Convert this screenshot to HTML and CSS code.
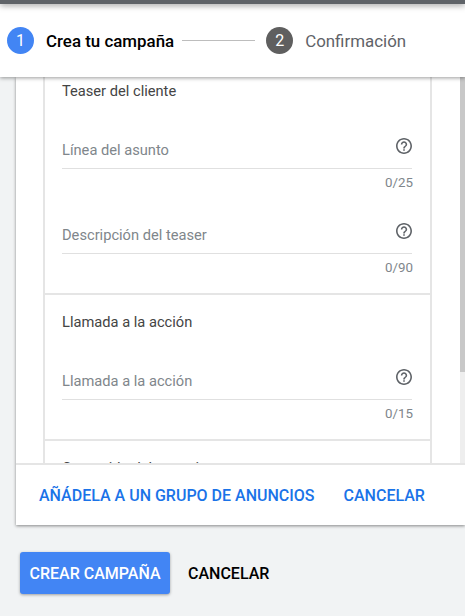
FILE: index.html
```html
<!DOCTYPE html>
<html lang="es">
<head>
  <meta charset="UTF-8">
  <meta name="viewport" content="width=device-width, initial-scale=1.0">
  <title>Crea tu campaña</title>
  <link rel="stylesheet" href="styles.css">
</head>
<body>

<div class="top-strip"></div>

<header class="stepper">
  <div class="step-num step-num-active">1</div>
  <div class="step-title">Crea tu campaña</div>
  <div class="step-line"></div>
  <div class="step-num">2</div>
  <div class="step-title step-title-off">Confirmación</div>
</header>

<div class="card">
  <div class="card-body">
    <div class="card-scroll">
      <div class="box">
        <section class="section section-first">
          <h2>Teaser del cliente</h2>
          <div class="field">
            <span class="field-label">Línea del asunto</span>
            <svg class="help" viewBox="2 2 20 20"><path d="M11 18h2v-2h-2v2zm1-16C6.48 2 2 6.48 2 12s4.48 10 10 10 10-4.48 10-10S17.52 2 12 2zm0 18c-4.41 0-8-3.59-8-8s3.59-8 8-8 8 3.59 8 8-3.59 8-8 8zm0-14c-2.21 0-4 1.79-4 4h2c0-1.1.9-2 2-2s2 .9 2 2c0 2-3 1.75-3 5h2c0-2.25 3-2.5 3-5 0-2.21-1.79-4-4-4z"/></svg>
          </div>
          <div class="count">0/25</div>
          <div class="field field-next">
            <span class="field-label">Descripción del teaser</span>
            <svg class="help" viewBox="2 2 20 20"><path d="M11 18h2v-2h-2v2zm1-16C6.48 2 2 6.48 2 12s4.48 10 10 10 10-4.48 10-10S17.52 2 12 2zm0 18c-4.41 0-8-3.59-8-8s3.59-8 8-8 8 3.59 8 8-3.59 8-8 8zm0-14c-2.21 0-4 1.79-4 4h2c0-1.1.9-2 2-2s2 .9 2 2c0 2-3 1.75-3 5h2c0-2.25 3-2.5 3-5 0-2.21-1.79-4-4-4z"/></svg>
          </div>
          <div class="count">0/90</div>
        </section>
        <section class="section">
          <h2>Llamada a la acción</h2>
          <div class="field">
            <span class="field-label">Llamada a la acción</span>
            <svg class="help" viewBox="2 2 20 20"><path d="M11 18h2v-2h-2v2zm1-16C6.48 2 2 6.48 2 12s4.48 10 10 10 10-4.48 10-10S17.52 2 12 2zm0 18c-4.41 0-8-3.59-8-8s3.59-8 8-8 8 3.59 8 8-3.59 8-8 8zm0-14c-2.21 0-4 1.79-4 4h2c0-1.1.9-2 2-2s2 .9 2 2c0 2-3 1.75-3 5h2c0-2.25 3-2.5 3-5 0-2.21-1.79-4-4-4z"/></svg>
          </div>
          <div class="count">0/15</div>
        </section>
        <section class="section">
          <h2>Contenido del anuncio</h2>
        </section>
      </div>
    </div>
    <div class="scrollbar"><div class="scrollbar-thumb"></div></div>
  </div>
  <div class="card-footer">
    <button class="link-btn">AÑÁDELA A UN GRUPO DE ANUNCIOS</button>
    <button class="link-btn">CANCELAR</button>
  </div>
</div>

<div class="page-actions">
  <button class="primary-btn">CREAR CAMPAÑA</button>
  <button class="plain-btn">CANCELAR</button>
</div>

</body>
</html>
```

FILE: styles.css
```css
body {
  font-family: 'Roboto', sans-serif;
  margin: 0;
  height: 616px;
  overflow: hidden;
  display: flex;
  flex-direction: column;
  background-color: #f1f3f4;
}

button {
  font-family: inherit;
  font-size: 16px;
  font-weight: 500;
  border: none;
  background: none;
  padding: 0;
  cursor: pointer;
}

.top-strip {
  flex: none;
  height: 4px;
  background-color: #5f6368;
  box-shadow: 0 1px 6px rgba(0, 0, 0, 0.5);
  position: relative;
  z-index: 3;
}

/* Stepper */
.stepper {
  flex: none;
  height: 73px;
  box-sizing: border-box;
  padding: 0 7px;
  display: flex;
  align-items: center;
  background-color: #fff;
  box-shadow: 0 1px 4px rgba(0, 0, 0, 0.4);
  position: relative;
  z-index: 2;
}

.step-num {
  flex: none;
  width: 27px;
  height: 27px;
  border-radius: 50%;
  background-color: #5f5f5f;
  color: #fff;
  font-size: 16px;
  line-height: 27px;
  text-align: center;
}

.step-num-active {
  background-color: #4285f4;
}

.step-title {
  margin-left: 12px;
  font-size: 16.9px;
  font-weight: 500;
  color: #000;
}

.step-title-off {
  font-weight: 400;
  color: #5f6368;
}

.step-line {
  width: 73px;
  height: 1px;
  margin: 0 11px 0 8px;
  background-color: #bdbdbd;
}

/* Card */
.card {
  flex: none;
  height: 448px;
  margin-left: 16px;
  display: flex;
  flex-direction: column;
  background-color: #fff;
  box-shadow: 0 1px 3px rgba(0, 0, 0, 0.45);
}

.card-body {
  flex: 1;
  min-height: 0;
  display: flex;
  overflow: hidden;
}

.card-scroll {
  flex: 1;
  padding: 0 28px 0 27px;
}

.box {
  border-left: 2px solid #e5e5e5;
  border-right: 2px solid #e5e5e5;
}

.section {
  padding: 17px 18px 17px 17px;
  border-bottom: 2px solid #e5e5e5;
}

.section-first {
  padding-top: 4px;
}

.section h2 {
  margin: 0;
  font-size: 14.67px;
  font-weight: 400;
  line-height: 20px;
  color: #444;
}

.field {
  margin-top: 28px;
  height: 40px;
  box-sizing: border-box;
  display: flex;
  justify-content: space-between;
  border-bottom: 1px solid #e0e0e0;
}

.field-next {
  margin-top: 23px;
}

.field-label {
  font-size: 14.67px;
  line-height: 42px;
  color: #80868b;
}

.help {
  width: 16px;
  height: 16px;
  margin-top: 9px;
  fill: #5f6368;
}

.count {
  margin-top: 6px;
  margin-right: -1px;
  font-size: 13.33px;
  line-height: 16px;
  text-align: right;
  color: #80868b;
}

.scrollbar {
  flex: none;
  width: 5px;
  background-color: #eee;
}

.scrollbar-thumb {
  height: 295px;
  background-color: #c8c8c8;
}

.card-footer {
  flex: none;
  height: 62px;
  box-sizing: border-box;
  padding: 0 0 0 23px;
  display: flex;
  align-items: center;
  gap: 29px;
  border-top: 2px solid #e5e5e5;
}

.link-btn {
  color: #1a73e8;
}

/* Page actions */
.page-actions {
  margin-top: 27px;
  padding-left: 20px;
  display: flex;
  align-items: center;
  gap: 18px;
}

.primary-btn {
  height: 42px;
  width: 150px;
  border-radius: 3px;
  background-color: #4285f4;
  color: #fff;
  box-shadow: 0 1px 3px rgba(0, 0, 0, 0.35);
}

.plain-btn {
  color: #000;
}
```
